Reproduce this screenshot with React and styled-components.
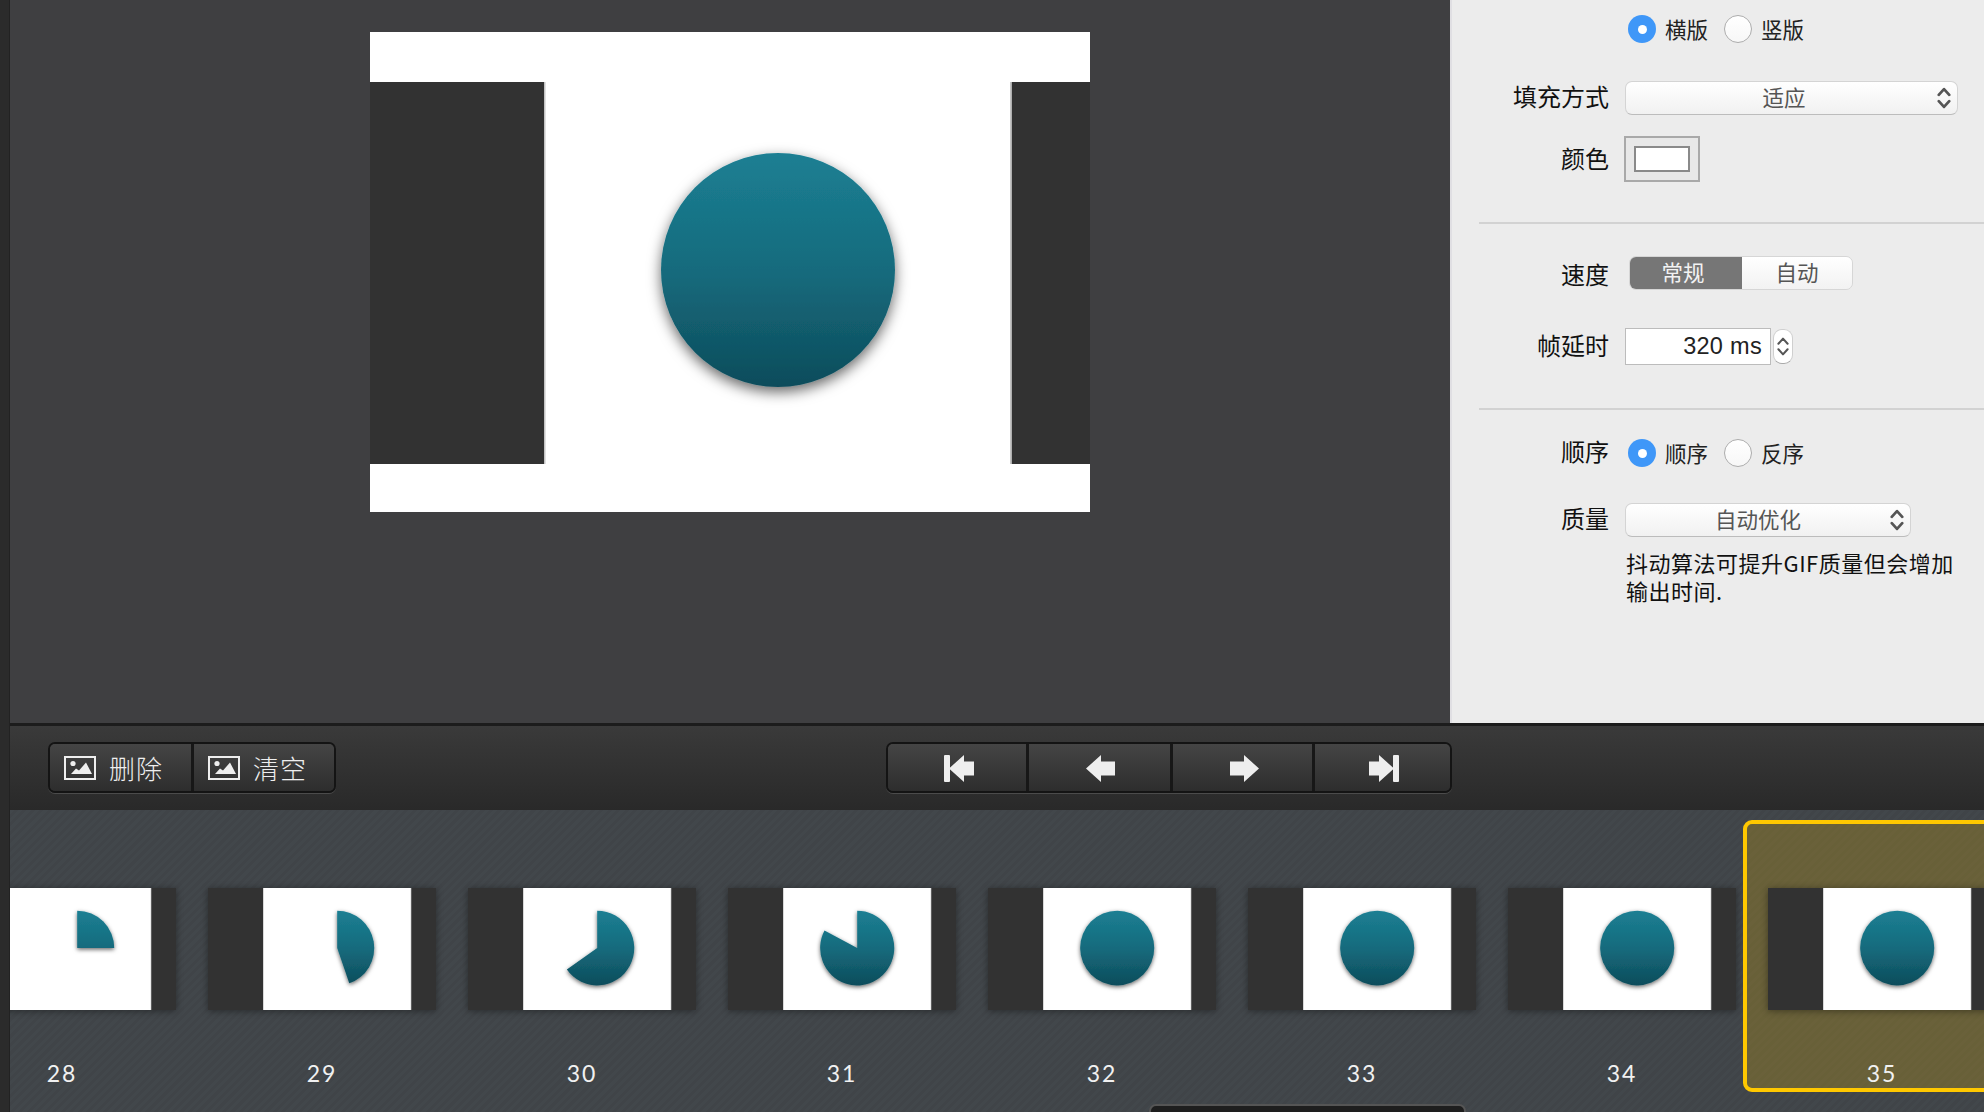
import React from 'react';
import styled, { createGlobalStyle } from 'styled-components';

const Global = createGlobalStyle`
  html, body { margin: 0; padding: 0; background: #2a2a2a; }
  * { box-sizing: border-box; }
`;

const CJK = `"Noto Sans CJK SC", "Liberation Sans", sans-serif`;

const Root = styled.div`
  width: 1984px;
  height: 1112px;
  display: flex;
  overflow: hidden;
  position: relative;
  font-family: ${CJK};
`;
const LeftEdge = styled.div`
  width: 10px;
  flex: none;
  background: #2b2b2b;
  border-right: 1px solid #222;
`;
const Main = styled.div`
  flex: 1;
  min-width: 0;
  display: flex;
  flex-direction: column;
`;
const TopArea = styled.div`
  height: 723px;
  display: flex;
  flex: none;
`;
const Stage = styled.div`
  flex: 1;
  padding: 32px 0 0 360px;
  background: #3f3f41;
`;
const Panel = styled.aside`
  width: 534px;
  flex: none;
  background: #ececec;
  border-left: 2px solid #e0dfe3;
  padding-top: 12px;
`;
const Row = styled.div`
  display: grid;
  grid-template-columns: 157px 1fr;
  column-gap: 16px;
  align-items: center;
  height: ${p => p.$h}px;
  margin-top: ${p => p.$top || 0}px;
`;
const Label = styled.div`
  font-size: 24px;
  line-height: 30px;
  color: #111;
  text-align: right;
  transform: translateY(${p => p.$dy ?? -2.5}px);
`;
const Divider = styled.div`
  height: 2px;
  background: #d2d2d2;
  margin: ${p => p.$top}px 0 0 27px;
`;
const RadioGroup = styled.div`
  display: flex;
  align-items: center;
  padding-left: 3px;
`;
const RadioDot = styled.span`
  width: 28px;
  height: 28px;
  border-radius: 50%;
  flex: none;
  display: flex;
  align-items: center;
  justify-content: center;
  background: ${p => (p.$on ? '#3f97f8' : 'linear-gradient(#fff, #f7f7f7)')};
  border: ${p => (p.$on ? 'none' : '1.5px solid #adadad')};
  &::after {
    content: '';
    display: ${p => (p.$on ? 'block' : 'none')};
    width: 9px;
    height: 9px;
    border-radius: 50%;
    background: #fff;
  }
`;
const RadioText = styled.span`
  font-size: 21.5px;
  line-height: 28px;
  color: #222;
  margin: 0 16px 0 9px;
`;
const SelectBox = styled.div`
  width: ${p => p.$w}px;
  height: 34px;
  border-radius: 7px;
  border: 1px solid #d4d4d4;
  border-bottom-color: #bcbcbc;
  background: linear-gradient(#ffffff, #f1f1f1);
  display: flex;
  align-items: center;
  padding-right: 6px;
`;
const SelectText = styled.span`
  flex: 1;
  text-align: center;
  font-size: 21.5px;
  line-height: 30px;
  color: #555;
  padding-left: ${p => p.$shift || 0}px;
  transform: translateY(-1.5px);
`;
const Well = styled.div`
  width: 76px;
  height: 46px;
  border: 2px solid #a9a9a9;
  background: #e8e8e8;
  padding: 8px;
  margin-left: -1px;
`;
const WellColor = styled.div`
  width: 56px;
  height: 26px;
  background: #fff;
  border: 2px solid #8a8a8a;
`;
const Segmented = styled.div`
  margin-left: 4px;
  display: flex;
  width: 224px;
  height: 34px;
  border-radius: 7px;
  overflow: hidden;
  border: 1px solid #d6d6d6;
`;
const Segment = styled.div`
  width: ${p => p.$w}px;
  font-size: 21.5px;
  line-height: 30px;
  text-align: center;
  padding-right: ${p => (p.$on ? 6 : 0)}px;
  color: ${p => (p.$on ? '#f2f2f2' : '#555')};
  background: ${p => (p.$on ? '#767676' : 'linear-gradient(#fff, #f2f2f2)')};
`;
const DelayGroup = styled.div`
  display: flex;
  align-items: center;
  gap: 2px;
`;
const DelayInput = styled.div`
  width: 146px;
  height: 37px;
  background: #fff;
  border: 1.5px solid #bcbcbc;
  font-family: "Liberation Sans", sans-serif;
  font-size: 23.5px;
  letter-spacing: 0.3px;
  line-height: 34px;
  text-align: right;
  color: #222;
  padding-right: 8px;
`;
const Stepper = styled.div`
  width: 20px;
  height: 35px;
  border-radius: 9px;
  background: #fff;
  border: 1px solid #cfcfcf;
  border-bottom-color: #aaa;
  display: flex;
  align-items: center;
  justify-content: center;
`;
const Note = styled.div`
  margin: 11px 0 0 174px;
  width: 335px;
  font-size: 22px;
  letter-spacing: 0.5px;
  line-height: 28px;
  color: #111;
`;
const Toolbar = styled.div`
  height: 87px;
  flex: none;
  display: flex;
  align-items: flex-start;
  padding: 16px 0 0 38px;
  border-top: 3px solid #1c1c1c;
  background: linear-gradient(#3a3a3a, #292929);
`;
const BtnGroup = styled.div`
  display: flex;
  height: 51px;
  width: ${p => p.$w}px;
  margin-left: ${p => p.$left || 0}px;
  border: 2px solid #141414;
  border-radius: 7px;
  overflow: hidden;
  box-shadow: 0 1px 0 #4b4b4b;
  flex: none;
`;
const Btn = styled.div`
  width: ${p => p.$w}px;
  flex: ${p => (p.$w ? 'none' : '1')};
  display: flex;
  align-items: center;
  justify-content: ${p => (p.$center ? 'center' : 'flex-start')};
  padding: ${p => (p.$center ? '2px 0 0 3px' : '0 0 0 14px')};
  gap: 13px;
  background: linear-gradient(#454545, #2d2d2d);
  color: #eee;
  & + & { border-left: 3px solid #171717; }
`;
const BtnText = styled.span`
  font-size: 26px;
  font-weight: 300;
  line-height: 30px;
  letter-spacing: 1px;
  color: #eee;
`;
const Strip = styled.div`
  flex: 1;
  min-height: 0;
  overflow: hidden;
  background: repeating-linear-gradient(135deg, #42474b 0 3px, #404448 3px 6px);
`;
const Track = styled.div`
  display: flex;
  margin-left: -87px;
  padding-top: 10px;
  width: 2400px;
`;
const Cell = styled.div`
  flex: none;
  width: 260px;
  height: 272px;
  padding: 64px 3px 0 21px;
  border: 4px solid ${p => (p.$sel ? '#ffc800' : 'transparent')};
  border-radius: 9px;
  background: ${p => (p.$sel ? 'repeating-linear-gradient(135deg, #6a613a 0 3px, #686038 3px 6px)' : 'transparent')};
`;
const ThumbBox = styled.div`
  width: 228px;
  height: 122px;
  box-shadow: 0 1px 7px rgba(0, 0, 0, 0.4);
  & > svg { display: block; }
`;
const CellLabel = styled.div`
  margin-top: 48px;
  font-family: Lato, "Liberation Sans", sans-serif;
  font-weight: 400;
  font-size: 23px;
  letter-spacing: 1.8px;
  line-height: 30px;
  text-align: center;
  color: #f1f1f1;
`;
const Tooltip = styled.div`
  position: absolute;
  left: 1149px;
  top: 1104px;
  width: 317px;
  height: 20px;
  background: #1e1e1e;
  border: 2px solid #555;
  border-radius: 7px;
`;

const piePath = (cx, cy, r, deg) => {
  const a = (deg * Math.PI) / 180;
  const x = cx + r * Math.sin(a);
  const y = cy - r * Math.cos(a);
  return `M${cx} ${cy} L${cx} ${cy - r} A${r} ${r} 0 ${deg > 180 ? 1 : 0} 1 ${x.toFixed(2)} ${y.toFixed(2)} Z`;
};

const CX = 408;
const CY = 238;
const R = 117;

const Picture = ({ uid, angle, width, height, viewBox }) => (
  <svg width={width} height={height} viewBox={viewBox} preserveAspectRatio="none">
    <defs>
      <linearGradient id={`g${uid}`} x1="0" y1={CY - R} x2="0" y2={CY + R} gradientUnits="userSpaceOnUse">
        <stop offset="0" stopColor="#1c7f93" />
        <stop offset="0.5" stopColor="#156b7d" />
        <stop offset="1" stopColor="#0e4c5b" />
      </linearGradient>
      <filter id={`f${uid}`} x="-30%" y="-30%" width="160%" height="160%">
        <feDropShadow dx="0" dy="5" stdDeviation="7" floodColor="#000" floodOpacity="0.6" />
      </filter>
    </defs>
    <rect x="0" y="0" width="720" height="480" fill="#fff" />
    <rect x="0" y="50" width="174" height="382" fill="#323232" />
    <rect x="174" y="50" width="1.5" height="382" fill="#c4c4c4" />
    <rect x="641.5" y="50" width="78.5" height="382" fill="#323232" />
    <rect x="640" y="50" width="1.5" height="382" fill="#c4c4c4" />
    {angle >= 360 ? (
      <circle cx={CX} cy={CY} r={R} fill={`url(#g${uid})`} filter={`url(#f${uid})`} />
    ) : (
      <path d={piePath(CX, CY, R, angle)} fill={`url(#g${uid})`} filter={`url(#f${uid})`} />
    )}
  </svg>
);

const Chevrons = ({ width = 14, height = 22, color = '#555', sw = 2.6 }) => (
  <svg width={width} height={height} viewBox="0 0 13 21" fill="none" stroke={color} strokeWidth={sw} strokeLinecap="round" strokeLinejoin="round" style={{ flex: 'none' }}>
    <path d="M1.5 7.5 L6.5 2 L11.5 7.5" />
    <path d="M1.5 13.5 L6.5 19 L11.5 13.5" />
  </svg>
);

const ImageIcon = () => (
  <svg width="32" height="24" viewBox="0 0 32 24" style={{ flex: 'none' }}>
    <rect x="1" y="1" width="30" height="22" fill="none" stroke="#eee" strokeWidth="2" />
    <circle cx="9" cy="7.5" r="2.6" fill="#eee" />
    <path d="M7 18 L12 12.5 L15 14.5 L22 6.5 L28 18 Z" fill="#eee" />
  </svg>
);

const TransportIcon = ({ kind }) => {
  const left = 'M5 13.5 L20 0 L20 6.5 L30 6.5 L30 20.5 L20 20.5 L20 27 Z';
  const arrow = 'M0 13.5 L15 0 L15 6.5 L29 6.5 L29 20.5 L15 20.5 L15 27 Z';
  return (
    <svg width="30" height="27" viewBox="0 0 30 27" fill="#eee">
      {kind === 'first' && (<><rect x="0" y="0" width="6" height="27" rx="1" /><path d={left} /></>)}
      {kind === 'prev' && <path d={arrow} />}
      {kind === 'next' && <path d={arrow} transform="translate(30 0) scale(-1 1)" />}
      {kind === 'last' && (<g transform="translate(30 0) scale(-1 1)"><rect x="0" y="0" width="6" height="27" rx="1" /><path d={left} /></g>)}
    </svg>
  );
};

const frames = [
  { n: 28, angle: 90 },
  { n: 29, angle: 161 },
  { n: 30, angle: 235 },
  { n: 31, angle: 298 },
  { n: 32, angle: 360 },
  { n: 33, angle: 360 },
  { n: 34, angle: 360 },
  { n: 35, angle: 360, sel: true },
];

const Radio = ({ on, children }) => (
  <>
    <RadioDot $on={on} />
    <RadioText>{children}</RadioText>
  </>
);

export default function App() {
  return (
    <Root>
      <Global />
      <LeftEdge />
      <Main>
        <TopArea>
          <Stage>
            <Picture uid="main" angle={360} width={720} height={480} viewBox="0 0 720 480" />
          </Stage>
          <Panel>
            <Row $h={34}>
              <span />
              <RadioGroup>
                <Radio on>横版</Radio>
                <Radio>竖版</Radio>
              </RadioGroup>
            </Row>
            <Row $h={34} $top={35}>
              <Label>填充方式</Label>
              <SelectBox $w={333}>
                <SelectText $shift={5}>适应</SelectText>
                <Chevrons />
              </SelectBox>
            </Row>
            <Row $h={46} $top={21}>
              <Label $dy={-1.5}>颜色</Label>
              <Well><WellColor /></Well>
            </Row>
            <Divider $top={40} />
            <Row $h={34} $top={32}>
              <Label $dy={0.5}>速度</Label>
              <Segmented>
                <Segment $w={113} $on>常规</Segment>
                <Segment $w={111}>自动</Segment>
              </Segmented>
            </Row>
            <Row $h={37} $top={38}>
              <Label>帧延时</Label>
              <DelayGroup>
                <DelayInput>320 ms</DelayInput>
                <Stepper><Chevrons width={12} height={25} color="#555" sw={2.2} /></Stepper>
              </DelayGroup>
            </Row>
            <Divider $top={43} />
            <Row $h={28} $top={28}>
              <Label>顺序</Label>
              <RadioGroup>
                <Radio on>顺序</Radio>
                <Radio>反序</Radio>
              </RadioGroup>
            </Row>
            <Row $h={34} $top={37}>
              <Label>质量</Label>
              <SelectBox $w={286}>
                <SelectText>自动优化</SelectText>
                <Chevrons />
              </SelectBox>
            </Row>
            <Note>抖动算法可提升GIF质量但会增加输出时间.</Note>
          </Panel>
        </TopArea>
        <Toolbar>
          <BtnGroup $w={288}>
            <Btn $w={141}><ImageIcon /><BtnText>删除</BtnText></Btn>
            <Btn><ImageIcon /><BtnText>清空</BtnText></Btn>
          </BtnGroup>
          <BtnGroup $w={566} $left={550}>
            <Btn $center $w={138}><TransportIcon kind="first" /></Btn>
            <Btn $center $w={144}><TransportIcon kind="prev" /></Btn>
            <Btn $center $w={142}><TransportIcon kind="next" /></Btn>
            <Btn $center><TransportIcon kind="last" /></Btn>
          </BtnGroup>
        </Toolbar>
        <Strip>
          <Track>
            {frames.map(f => (
              <Cell key={f.n} $sel={f.sel}>
                <ThumbBox>
                  <Picture uid={`t${f.n}`} angle={f.angle} width={228} height={122} viewBox="0 50 720 382" />
                </ThumbBox>
                <CellLabel>{f.n}</CellLabel>
              </Cell>
            ))}
          </Track>
        </Strip>
      </Main>
      <Tooltip />
    </Root>
  );
}
